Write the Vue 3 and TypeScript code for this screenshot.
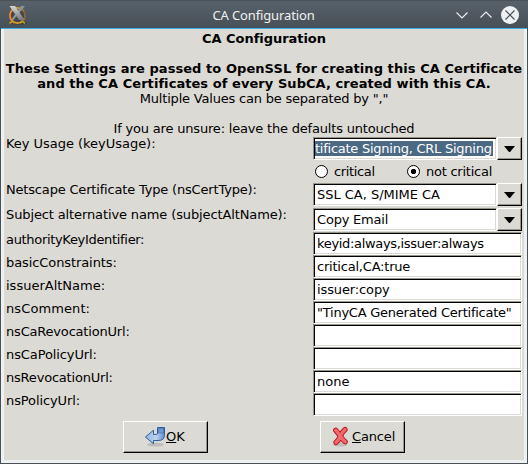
<script setup lang="ts">
import { ref } from 'vue'

interface TextLine {
  text: string
  spacing: number
  bold?: boolean
}

interface Field {
  label: string
  labelSpacing: number
  value: string
  valueSpacing: number
  combo?: boolean
  selected?: boolean
  radios?: boolean
}

const heading: TextLine[] = [
  { text: 'CA Configuration', spacing: -0.04, bold: true },
  { text: '', spacing: 0 },
  { text: 'These Settings are passed to OpenSSL for creating this CA Certificate', spacing: 0.063, bold: true },
  { text: 'and the CA Certificates of every SubCA, created with this CA.', spacing: 0.058, bold: true },
  { text: 'Multiple Values can be separated by ","', spacing: -0.2 },
  { text: '', spacing: 0 },
  { text: 'If you are unsure: leave the defaults untouched', spacing: -0.19 },
]

const fields: Field[] = [
  { label: 'Key Usage (keyUsage):', labelSpacing: -0.03, value: 'tificate Signing, CRL Signing', valueSpacing: -0.25, combo: true, selected: true, radios: true },
  { label: 'Netscape Certificate Type (nsCertType):', labelSpacing: -0.18, value: 'SSL CA, S/MIME CA', valueSpacing: -0.02, combo: true },
  { label: 'Subject alternative name (subjectAltName):', labelSpacing: -0.12, value: 'Copy Email', valueSpacing: -0.2, combo: true },
  { label: 'authorityKeyIdentifier:', labelSpacing: -0.32, value: 'keyid:always,issuer:always', valueSpacing: -0.33 },
  { label: 'basicConstraints:', labelSpacing: -0.09, value: 'critical,CA:true', valueSpacing: -0.21 },
  { label: 'issuerAltName:', labelSpacing: 0, value: 'issuer:copy', valueSpacing: -0.12 },
  { label: 'nsComment:', labelSpacing: 0.1, value: '"TinyCA Generated Certificate"', valueSpacing: -0.24 },
  { label: 'nsCaRevocationUrl:', labelSpacing: -0.19, value: '', valueSpacing: 0 },
  { label: 'nsCaPolicyUrl:', labelSpacing: -0.1, value: '', valueSpacing: 0 },
  { label: 'nsRevocationUrl:', labelSpacing: -0.2, value: 'none', valueSpacing: 0 },
  { label: 'nsPolicyUrl:', labelSpacing: -0.1, value: '', valueSpacing: 0 },
]

const criticality = ref<'critical' | 'not critical'>('not critical')
const tracking = (n: number) => ({ letterSpacing: `${n}px` })
</script>

<template>
  <div class="window">
    <header class="titlebar">
      <svg class="app-icon" width="20" height="20" viewBox="0 0 20 20">
        <defs>
          <linearGradient id="ring" x1="0" y1="0" x2="1" y2="0">
            <stop offset="0" stop-color="#ff8420" />
            <stop offset=".5" stop-color="#dca32c" />
            <stop offset="1" stop-color="#8a6238" />
          </linearGradient>
          <linearGradient id="steel" x1="0" y1="0" x2="0" y2="1">
            <stop offset="0" stop-color="#d8d8d8" />
            <stop offset="1" stop-color="#777" />
          </linearGradient>
        </defs>
        <ellipse cx="12" cy="18" rx="8" ry="1.6" fill="#252a2e" opacity=".5" />
        <circle cx="10.5" cy="10.5" r="7.6" fill="#42484d" stroke="url(#ring)" stroke-width="1.8" />
        <path d="M14 1H18L6.5 15H4Z" fill="#909394" />
        <path d="M2.5 1H8L17.5 15H12Z" fill="url(#steel)" />
        <path d="M2.5 18.2 5.5 16.4 7.5 18.2M13 18.2 15 16.4 18 18.2" fill="none" stroke="#c7a21f" stroke-width="1.6" />
      </svg>
      <span class="title">CA Configuration</span>
      <svg class="controls" width="64" height="20" viewBox="0 0 64 20">
        <path d="M.5 7.5 6 13 11.5 7.5M24.5 12.5 30 7 35.5 12.5" fill="none" stroke="#eff0f1" stroke-width="1.1" />
        <circle cx="54" cy="10" r="9" fill="#eff0f1" />
        <path d="M49.5 5.5 58.5 14.5M58.5 5.5 49.5 14.5" stroke="#475057" stroke-width="1.2" />
      </svg>
    </header>

    <main class="content">
      <div class="heading">
        <p v-for="(line, i) in heading" :key="i" :class="{ bold: line.bold }" :style="tracking(line.spacing)">{{ line.text }}</p>
      </div>

      <div class="form">
        <div v-for="f in fields" :key="f.label" class="row" :class="{ 'combo-row': f.combo, 'radio-row': f.radios }">
          <label :style="tracking(f.labelSpacing)">{{ f.label }}</label>
          <div class="control">
            <div class="field">
              <div class="entry" :class="{ selected: f.selected }">
                <span :style="tracking(f.valueSpacing)">{{ f.value }}</span>
              </div>
              <button v-if="f.combo" class="drop">
                <svg width="11" height="6" viewBox="0 0 11 6"><path d="M0 0H11L6 6H5Z" fill="#000" /></svg>
              </button>
            </div>
            <div v-if="f.radios" class="radios">
              <div class="radio first" @click="criticality = 'critical'">
                <i :class="{ on: criticality === 'critical' }"></i><span>critical</span>
              </div>
              <div class="radio second" @click="criticality = 'not critical'">
                <i :class="{ on: criticality === 'not critical' }"></i><span>not critical</span>
              </div>
            </div>
          </div>
        </div>
      </div>

      <footer class="actions">
        <button class="push ok">
          <svg width="22" height="22" viewBox="0 0 22 22">
            <defs>
              <linearGradient id="blue" x1="0" y1="0" x2="1" y2="0">
                <stop offset="0" stop-color="#8db4df" />
                <stop offset=".55" stop-color="#bdd3ee" />
                <stop offset="1" stop-color="#5d8fca" />
              </linearGradient>
            </defs>
            <ellipse cx="11.5" cy="18.6" rx="8.5" ry="2" fill="#000" opacity=".13" />
            <path d="M13.5 1.5H20.5V9.5Q20.5 14.5 14 14.5H9.5V17.8L1.4 11 9.5 4.2V8.5H12.5Q13.5 8.5 13.5 7Z" fill="url(#blue)" stroke="#2f5f9e" stroke-linejoin="round" />
            <path d="M14.5 2.5H19.5V7H14.5Z" fill="#6f9dd3" stroke="#36649f" stroke-width=".6" />
          </svg>
          <span><u>O</u>K</span>
        </button>
        <button class="push cancel">
          <svg width="20" height="22" viewBox="0 0 20 22">
            <ellipse cx="8" cy="18.6" rx="7.5" ry="2" fill="#000" opacity=".13" />
            <path d="M3.7 4.2Q7 8 8.3 10.2Q11 14 13.2 15.8M13 3.6Q10 6 8.3 10.2Q6.5 14.5 4 16.4" fill="none" stroke="#b9151b" stroke-width="5.2" stroke-linecap="round" />
            <path d="M3.7 4.2Q7 8 8.3 10.2Q11 14 13.2 15.8M13 3.6Q10 6 8.3 10.2Q6.5 14.5 4 16.4" fill="none" stroke="#f0696c" stroke-width="3.4" stroke-linecap="round" />
          </svg>
          <span><u>C</u>ancel</span>
        </button>
      </footer>
    </main>
  </div>
</template>

<style>
body {
  margin: 0;
  overflow: hidden;
}
</style>

<style scoped>
.window {
  box-sizing: border-box;
  width: 528px;
  height: 464px;
  background: #eff0f1;
  border: 1px solid #475057;
  border-top: 0;
  display: flex;
  flex-direction: column;
  font: 13px/15px "DejaVu Sans", sans-serif;
  color: #000;
}
.titlebar {
  height: 28px;
  margin: 0 -1px;
  padding: 0 8px 0 7px;
  box-sizing: border-box;
  display: grid;
  grid-template-columns: 64px 1fr 64px;
  align-items: center;
  background: linear-gradient(#566068, #566068 2px, #475057);
  border-top: 1px solid #4a5359;
}
.app-icon,
.controls {
  display: block;
}
.title {
  font: 13px/18px "Noto Sans", sans-serif;
  letter-spacing: -0.13px;
  color: #eff0f1;
  text-align: center;
}
.content {
  flex: 1;
  padding: 2px 0 0;
  border: solid #eff0f1;
  border-width: 0 3px 3px;
  background: #dcdad5;
  box-shadow: 0 -1px 0 #3daee9;
  margin-top: 1px;
}
.heading p {
  margin: 0;
  height: 15px;
  text-align: center;
  white-space: nowrap;
}
.bold {
  font-weight: bold;
}
.row {
  display: grid;
  grid-template-columns: 307px 209px;
  padding-left: 2px;
  height: 23px;
  white-space: nowrap;
}
.combo-row {
  height: 25px;
}
.combo-row .control {
  padding-top: 1px;
}
.radio-row {
  height: 46px;
}
.field {
  display: flex;
  height: 23px;
}
.entry {
  flex: 1;
  min-width: 0;
  box-sizing: border-box;
  height: 23px;
  padding: 2px 1px 0 2px;
  background: #fff;
  border: 1px solid;
  border-color: #96948b #fff #fff #96948b;
  box-shadow: inset 1px 1px 0 #000, inset -1px -1px 0 #dcdad5;
  overflow: hidden;
}
.entry span {
  display: block;
  height: 16px;
  padding: 1px 0 0 1px;
  overflow: hidden;
}
.entry.selected {
  padding-left: 1px;
}
.entry.selected span {
  width: 178px;
  height: 15px;
  margin-top: 1px;
  padding: 0;
  background: #4b6983;
  color: #fff;
}
button {
  box-sizing: border-box;
  margin: 0;
  padding: 0;
  font: inherit;
  color: #000;
  background: #dcdad5;
  border: 1px solid;
  border-color: #fff #000 #000 #fff;
  box-shadow: inset -1px -1px 0 #96948b;
  display: flex;
}
.drop {
  width: 25px;
  height: 23px;
  padding: 8px 0 0 6px;
}
.radios {
  display: flex;
  padding: 4px 0 0 2px;
}
.radio {
  display: flex;
  gap: 6px;
}
.radio.first {
  width: 92px;
  letter-spacing: -0.35px;
}
.radio.second {
  letter-spacing: -0.24px;
}
.radio i {
  box-sizing: border-box;
  width: 13px;
  height: 13px;
  margin-top: 1px;
  border: 1px solid #000;
  border-radius: 50%;
  background: #fff;
}
.radio i.on {
  background: radial-gradient(circle, #000 2.4px, #fff 3px);
}
.actions {
  display: flex;
  padding: 5px 0 0 119px;
  gap: 112px;
}
.push {
  width: 85px;
  height: 32px;
}
.ok {
  padding: 4px 0 0 20px;
}
.cancel {
  padding: 4px 0 0 11px;
}
.push span {
  margin-top: 3px;
}
.cancel span {
  letter-spacing: -0.15px;
}
.push u {
  text-underline-offset: 1px;
  text-decoration-thickness: 1px;
}
</style>
